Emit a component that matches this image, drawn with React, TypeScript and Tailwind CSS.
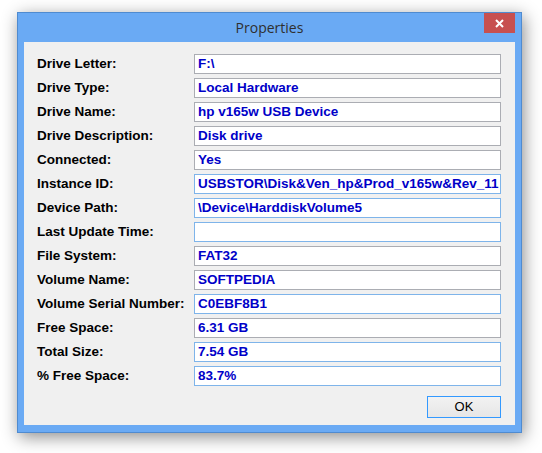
import React from "react";

type Row = { label: string; value: string; hot?: boolean };

const ROWS: Row[] = [
  { label: "Drive Letter:", value: "F:\\" },
  { label: "Drive Type:", value: "Local Hardware" },
  { label: "Drive Name:", value: "hp v165w USB Device" },
  { label: "Drive Description:", value: "Disk drive" },
  { label: "Connected:", value: "Yes" },
  { label: "Instance ID:", value: "USBSTOR\\Disk&Ven_hp&Prod_v165w&Rev_11", hot: true },
  { label: "Device Path:", value: "\\Device\\HarddiskVolume5", hot: true },
  { label: "Last Update Time:", value: "", hot: true },
  { label: "File System:", value: "FAT32" },
  { label: "Volume Name:", value: "SOFTPEDIA" },
  { label: "Volume Serial Number:", value: "C0EBF8B1", hot: true },
  { label: "Free Space:", value: "6.31 GB" },
  { label: "Total Size:", value: "7.54 GB", hot: true },
  { label: "% Free Space:", value: "83.7%", hot: true },
];

export default function App() {
  return (
    <div className="h-[453px] w-[542px] bg-white pl-[17px] pt-[12px]">
      <div className="flex h-[421px] w-[505px] flex-col border border-[#4f8bd0] bg-[#6aaaf4] shadow-[2px_4px_16px_rgba(0,0,0,0.45)]">
        {/* Title bar */}
        <div className="relative flex h-[29px] items-center justify-center">
          <span className="font-['Open_Sans',sans-serif] text-[14px] text-[#2f2f2f]">Properties</span>
          <div className="absolute right-[6px] top-0 flex h-[20px] w-[31px] items-center justify-center bg-[#c75050]">
            <svg width="9" height="9" viewBox="0 0 9 9">
              <path d="M1 1L8 8M8 1L1 8" stroke="white" strokeWidth="2" />
            </svg>
          </div>
        </div>

        {/* Client area */}
        <div className="mx-[6px] flex h-[383px] flex-col bg-[#f0f0f0] pl-[13px] pr-[14px] pt-[12px] font-['Liberation_Sans',Arial,sans-serif]">
          <div className="flex flex-col gap-[4px]">
            {ROWS.map((r) => (
              <div key={r.label} className="flex h-[20px] items-center">
                <div className="w-[157px] pt-[1px] text-[13.5px] font-bold text-black">{r.label}</div>
                <div
                  className={`flex h-[20px] w-[307px] items-center overflow-hidden whitespace-nowrap border bg-white pl-[3px] pt-[1px] text-[13.5px] font-bold text-[#0000c8] ${
                    r.hot ? "border-[#7eb4ea]" : "border-[#abadb3]"
                  }`}
                >
                  {r.value}
                </div>
              </div>
            ))}
          </div>
          <div className="mt-[10px] flex justify-end">
            <button className="h-[22px] w-[74px] border border-[#3399ff] bg-gradient-to-b from-[#f2f2f2] to-[#e6e6e6] text-[13px] text-black">
              OK
            </button>
          </div>
        </div>
      </div>
    </div>
  );
}
